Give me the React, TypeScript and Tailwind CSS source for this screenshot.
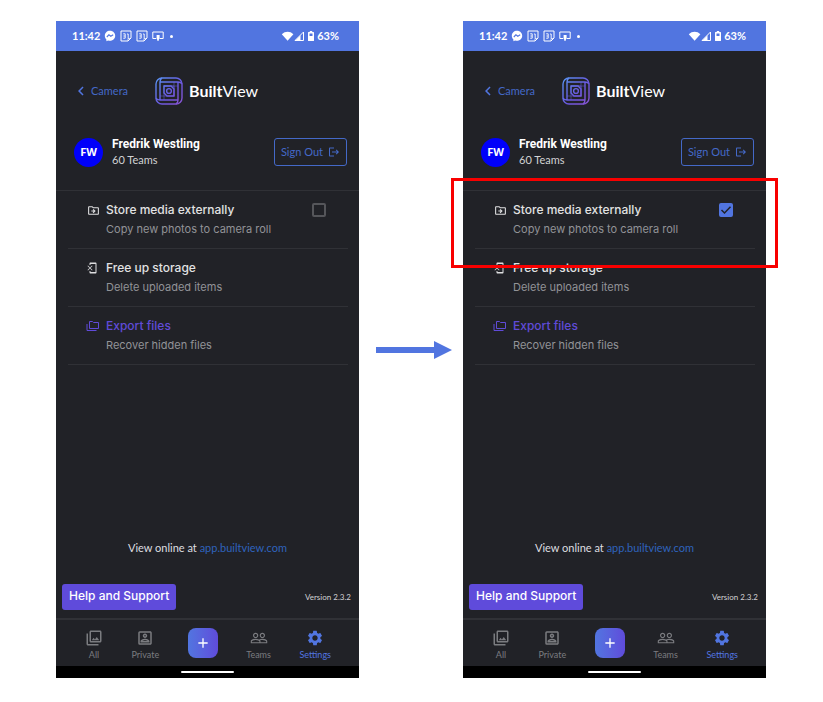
import { useId, useState, type ReactNode } from "react";
import {
  MdAdd,
  MdChevronLeft,
  MdLogout,
  MdOutlineDriveFileMove,
  MdOutlinePhotoLibrary,
  MdOutlinePortrait,
  MdPeopleOutline,
  MdPhonelinkErase,
  MdSettings,
} from "react-icons/md";

const rounded = "font-['Lato',sans-serif]";
const geometric = "font-['Inter',sans-serif]";

function CalendarIcon() {
  return (
    <svg viewBox="0 0 12 12" className="size-3" fill="none" stroke="currentColor">
      <path d="M1 1h10v7l-3 3H1z" />
      <path d="M3.2 3.8h2v4.4h-2M3.4 6h1.8M7 4h1.2v4.4" strokeWidth="0.9" />
      <path d="M8 11V8.5h3" strokeWidth="0.7" />
    </svg>
  );
}

function FoldersIcon() {
  return (
    <svg viewBox="0 0 13 12" className="h-3 w-[13px]" fill="none" stroke="currentColor">
      <path d="M3.500 1.500h3l1 1h5v6h-9z" />
      <path d="M1 4v6.500h9.500" />
    </svg>
  );
}

function StatusBar() {
  return (
    <div className="flex h-[30px] items-center justify-between bg-[#5175e0] pr-5 pl-4 text-[11px] leading-4 font-bold text-white">
      <div className={`flex items-center gap-1 ${rounded}`}>
        <span>11:42</span>
        <svg viewBox="0 0 12 12" className="size-3" aria-label="Messenger">
          <path d="M6 .8C3 .8.8 2.9.8 5.8c0 1.5.6 2.8 1.6 3.7v1.8l1.7-.8c.6.2 1.2.3 1.9.3 3 0 5.2-2.2 5.2-5S9 .8 6 .8z" fill="#fff" />
          <path d="M2.8 7l2.1-2.2 1.9 1.5 2.4-1.5" fill="none" stroke="#5175e0" strokeWidth="1.1" />
        </svg>
        <CalendarIcon />
        <CalendarIcon />
        <svg viewBox="0 0 12 12" className="size-3" fill="none" stroke="#fff" aria-label="Cast">
          <path d="M4 8.500H.8V2h10.400v6.500H8" />
          <path d="M4.600 5h3v3.200L6 10.800 4.600 8.200z" fill="#fff" stroke="none" />
          <path d="M6 7v4" />
        </svg>
        <span className="ml-0.5 size-[3px] rounded-full bg-white" />
      </div>
      <div className={`flex items-center ${rounded}`}>
        <svg viewBox="0 0 34 12" className="h-3 w-[34px]" fill="#fff" aria-label="Signal and battery">
          <path d="M.8 4.200C4.100.9 9.100.9 12.400 4.200L6.600 10.800z" />
          <path d="M14 10.500L22.500 2v8.500z" fill="none" stroke="#fff" />
          <path d="M14 10.800l5.500-5.500v5.500z" />
          <path d="M28.800 1h2.400v1h1.200q.6 0 .6.600v7.800q0 .6-.6.600h-4.800q-.6 0-.6-.600V2.600q0-.6.600-.600h1.200z" />
          <path d="M28.500 3.500h3v2.500h-3z" fill="#5175e0" />
        </svg>
        <span className="ml-0.5">63%</span>
      </div>
    </div>
  );
}

function Logo() {
  const id = useId();
  return (
    <svg viewBox="0 0 28 28" className="size-7" fill="none" stroke={`url(#${id})`} strokeWidth="1.400" aria-label="BuiltView logo">
      <defs>
        <linearGradient id={id} x1="0" y1="0" x2="28" y2="28" gradientUnits="userSpaceOnUse">
          <stop offset="0.100" stopColor="#5a8cf0" />
          <stop offset="0.550" stopColor="#6a5ae0" />
          <stop offset="1" stopColor="#8a52d0" />
        </linearGradient>
      </defs>
      <rect x="1" y="1" width="26" height="26" rx="6" />
      <path d="M7 1q-2 1-2 4v18M1 21q1 2 4 2h18M21 27q2-1 2-4V5M27 7q-1-2-4-2H5" />
      <path d="M9 23V9h10v10H5M19 5v14M9 9h14" strokeWidth="1" opacity="0.500" />
      <path d="M9 9h7l3 3v7h-7l-3-3z" />
      <circle cx="14" cy="14" r="2.400" />
    </svg>
  );
}

function SettingRow({
  icon,
  title,
  detail,
  accent = false,
  children,
}: {
  icon: ReactNode;
  title: string;
  detail: string;
  accent?: boolean;
  children?: ReactNode;
}) {
  return (
    <div className={`flex items-start border-b border-[#303136] pt-[9px] pr-[22px] pb-2.5 pl-[18px] ${geometric}`}>
      <span className={`flex h-5 w-5 shrink-0 items-center ${accent ? "text-[#604bd8]" : "text-[#dedee0]"}`}>{icon}</span>
      <div className="flex-1">
        <h2 className={`text-xs leading-5 font-medium ${accent ? "text-[#604bd8]" : "text-[#e2e2e3]"}`}>{title}</h2>
        <p className="text-[11px] leading-[18px] text-[#929397]">{detail}</p>
      </div>
      {children}
    </div>
  );
}

function NavItem({ icon, label, active = false }: { icon: ReactNode; label: string; active?: boolean }) {
  return (
    <button type="button" className={`flex flex-col items-center pt-1 text-[9px] leading-3 ${rounded} ${active ? "text-[#5175e0]" : "text-[#7b7c80]"}`}>
      {icon}
      <span className="mt-0.5">{label}</span>
    </button>
  );
}

function Phone({ stored, highlighted = false }: { stored: boolean; highlighted?: boolean }) {
  const [checked, setChecked] = useState(stored);
  const id = useId();
  return (
    <section className="flex min-w-0 flex-1 flex-col bg-[#212227]">
      <StatusBar />
      <header className="mt-6 flex h-8 items-center pl-4">
        <button type="button" className={`flex items-center text-[11px] leading-4 text-[#4469c8] ${rounded}`}>
          <MdChevronLeft className="size-[18px] text-[#5175e0]" />
          <span className="ml-px">Camera</span>
        </button>
        <div className="ml-[27px] flex items-center gap-1.5">
          <Logo />
          <h1 className={`text-base leading-6 text-white ${rounded}`}>
            <b>Built</b>View
          </h1>
        </div>
      </header>
      <div className="mt-[30px] flex items-center border-b border-[#303136] pr-3 pb-[23px] pl-[18px]">
        <span className="flex size-[29px] items-center justify-center rounded-full bg-[#0000fa] font-['Open_Sans',sans-serif] text-[11px] font-bold text-white">FW</span>
        <div className="ml-[9px] flex-1">
          <p className="font-['Roboto',sans-serif] text-xs leading-[15px] font-bold text-white">Fredrik Westling</p>
          <p className={`text-[11px] leading-[15px] text-[#d2d2d4] ${rounded}`}>60 Teams</p>
        </div>
        <button type="button" className={`flex h-7 items-center gap-[5px] rounded-[3px] border border-[#4469c8] px-1.5 text-[11px] leading-4 text-[#4469c8] ${rounded}`}>
          Sign Out
          <MdLogout className="size-3" stroke="currentColor" />
        </button>
      </div>
      <div className="relative pr-[11px] pl-3">
        <SettingRow icon={<MdOutlineDriveFileMove className="ml-px size-[13px]" />} title="Store media externally" detail="Copy new photos to camera roll">
          <span className="mt-[3px] grid size-3.5">
            <input
              id={id}
              type="checkbox"
              aria-label="Store media externally"
              checked={checked}
              onChange={(event) => setChecked(event.target.checked)}
              className="col-start-1 row-start-1 size-3.5 appearance-none rounded-[2px] border-2 border-[#55565a] checked:border-[#5175e0] checked:bg-[#5175e0]"
            />
            {checked && (
              <svg viewBox="0 0 14 14" className="pointer-events-none col-start-1 row-start-1 size-3.5" fill="none" stroke="#212227" strokeWidth="1.500">
                <path d="M2.500 7l3 3 6-6.300" />
              </svg>
            )}
          </span>
        </SettingRow>
        {highlighted && <div className="pointer-events-none absolute -inset-x-3 -top-[13px] z-10 h-[90px] border-[3px] border-[#f80000]" />}
        <SettingRow icon={<MdPhonelinkErase className="size-3" />} title="Free up storage" detail="Delete uploaded items" />
        <SettingRow accent icon={<FoldersIcon />} title="Export files" detail="Recover hidden files" />
      </div>
      <div className="flex-1" />
      <p className={`mb-7 text-center text-[11px] leading-4 text-[#dedee0] ${rounded}`}>
        View online at{" "}
        <a href="#app" className="text-[#2f62bd]">
          app.builtview.com
        </a>
      </p>
      <div className="flex items-center justify-between pr-2 pb-2 pl-1.5">
        <button type="button" className={`rounded-[3px] bg-[#5f4bdb] px-[7px] pt-1 pb-1.5 text-xs leading-4 font-medium text-white ${geometric}`}>
          Help and Support
        </button>
        <span className={`text-[8px] leading-3 text-[#d2d2d4] ${rounded}`}>Version 2.3.2</span>
      </div>
      <nav className="flex h-12 items-center justify-between border-t-2 border-[#303136] pr-7 pl-[29px]">
        <NavItem icon={<MdOutlinePhotoLibrary className="size-[18px]" />} label="All" />
        <NavItem icon={<MdOutlinePortrait className="size-[18px]" />} label="Private" />
        <button type="button" aria-label="Add" className="flex size-[30px] items-center justify-center rounded-lg bg-linear-to-r from-[#5175e0] to-[#5f4bdb] text-white">
          <MdAdd className="size-4" />
        </button>
        <NavItem icon={<MdPeopleOutline className="size-[18px]" />} label="Teams" />
        <NavItem active icon={<MdSettings className="size-[18px]" />} label="Settings" />
      </nav>
      <div className="flex h-3 items-center justify-center bg-black">
        <span className="h-0.5 w-[53px] rounded-full bg-white" />
      </div>
    </section>
  );
}

export default function App() {
  return (
    <main className="flex min-h-screen bg-white pt-[21px] pr-[57px] pb-6 pl-14">
      <Phone stored={false} />
      <div className="flex w-[104px] shrink-0 items-center pl-[17px]">
        <svg viewBox="0 0 76 18" className="h-[18px] w-[76px]" fill="#5175e0" aria-label="Leads to">
          <path d="M0 6h58V0l18 9-18 9v-6H0z" />
        </svg>
      </div>
      <Phone stored highlighted />
    </main>
  );
}
